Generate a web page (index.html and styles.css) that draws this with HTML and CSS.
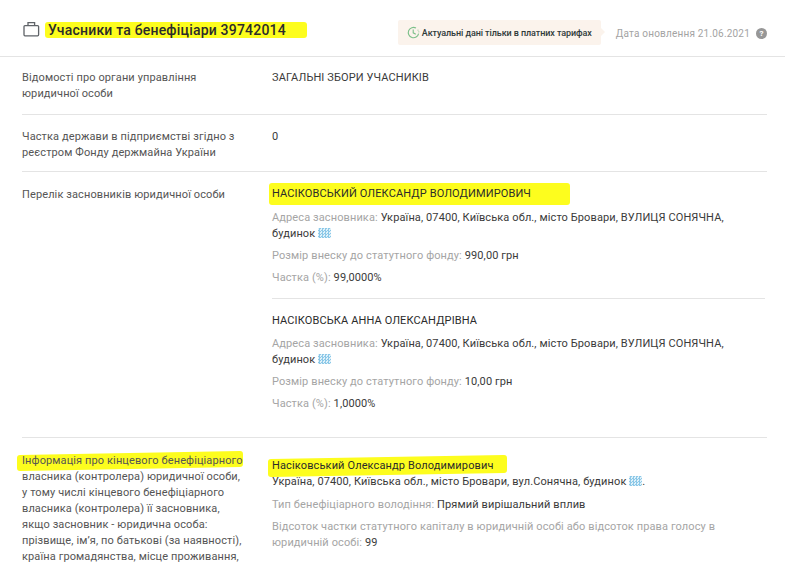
FILE: index.html
```html
<!DOCTYPE html>
<html lang="uk">
<head>
    <meta charset="UTF-8">
    <meta name="viewport" content="width=device-width, initial-scale=1.0">
    <title>Учасники та бенефіціари</title>
    <link rel="stylesheet" href="styles.css">
</head>
<body>
    <div class="header">
        <svg class="case-icon" width="17" height="16" viewBox="0 0 17 16" fill="none" stroke="#5f6368" stroke-width="1.3">
            <rect x="1" y="4.6" width="14.6" height="10.2" rx="1"/>
            <path d="M5 4.6V1.6h6.6v3"/>
        </svg>
        <h1 class="title"><span class="mark">Учасники та бенефіціари 39742014</span></h1>
        <div class="chip">
            <svg width="13" height="13" viewBox="0 0 13 13" fill="none" stroke="#7cc08a" stroke-width="1.1">
                <path d="M11.6 7.6A5.2 5.2 0 1 1 9 2"/>
                <path d="M6.2 3.4v3.4l2.6 1.4"/>
                <path d="M11 3.8v.8M11.8 5.6v.6"/>
            </svg>
            <span>Актуальні дані тільки в платних тарифах</span>
        </div>
        <div class="updated">Дата оновлення 21.06.2021</div>
        <div class="help">?</div>
    </div>

    <div class="rows">
        <div class="row">
            <div class="label">Відомості про органи управління юридичної особи</div>
            <div class="value">ЗАГАЛЬНІ ЗБОРИ УЧАСНИКІВ</div>
        </div>
        <div class="row row-share">
            <div class="label">Частка держави в підприємстві згідно з реєстром Фонду держмайна України</div>
            <div class="value">0</div>
        </div>
        <div class="row row-founders">
            <div class="label">Перелік засновників юридичної особи</div>
            <div class="value">
                <div class="person">
                    <div class="name"><span class="mark mark-name">НАСІКОВСЬКИЙ ОЛЕКСАНДР ВОЛОДИМИРОВИЧ</span></div>
                    <p class="info"><span class="muted">Адреса засновника:</span> Україна, 07400, Київська обл., місто Бровари, ВУЛИЦЯ СОНЯЧНА, будинок <span class="hidden-num"></span></p>
                    <p class="info"><span class="muted">Розмір внеску до статутного фонду:</span> 990,00 грн</p>
                    <p class="info"><span class="muted">Частка (%):</span> 99,0000%</p>
                </div>
                <div class="person">
                    <div class="name">НАСІКОВСЬКА АННА ОЛЕКСАНДРІВНА</div>
                    <p class="info"><span class="muted">Адреса засновника:</span> Україна, 07400, Київська обл., місто Бровари, ВУЛИЦЯ СОНЯЧНА, будинок <span class="hidden-num"></span></p>
                    <p class="info"><span class="muted">Розмір внеску до статутного фонду:</span> 10,00 грн</p>
                    <p class="info"><span class="muted">Частка (%):</span> 1,0000%</p>
                </div>
            </div>
        </div>
        <div class="row row-owner">
            <div class="label"><span class="slant slant-label">Інформація про кінцевого бенефіціарного</span> власника (контролера) юридичної особи, у тому числі кінцевого бенефіціарного власника (контролера) її засновника, якщо засновник - юридична особа: прізвище, ім’я, по батькові (за наявності), країна громадянства, місце проживання,</div>
            <div class="value owner">
                <div class="name"><span class="slant slant-owner">Насіковський Олександр Володимирович</span></div>
                <div class="address">Україна, 07400, Київська обл., місто Бровари, вул.Сонячна, будинок <span class="hidden-num"></span>.</div>
                <p class="info info-type"><span class="muted">Тип бенефіціарного володіння:</span> Прямий вирішальний вплив</p>
                <p class="info"><span class="muted">Відсоток частки статутного капіталу в юридичній особі або відсоток права голосу в юридичній особі:</span> 99</p>
            </div>
        </div>
    </div>
</body>
</html>
```

FILE: styles.css
```css
html, body {
    height: 100%;
    overflow: hidden;
}
body {
    margin: 0;
    background: #fff;
    color: #3a3a3a;
    font-family: Roboto, "Liberation Sans", sans-serif;
    font-size: 11px;
    line-height: 16px;
    letter-spacing: .11px;
}
p {
    margin: 0;
}
.mark {
    background: #fdfd1e;
    border-radius: 3px;
}
/* marker strokes that run slightly uphill */
.slant {
    position: relative;
    z-index: 0;
    display: inline-block;
    white-space: nowrap;
}
.slant::before {
    content: "";
    position: absolute;
    z-index: -1;
    top: -1px;
    bottom: -1px;
    background: #fdfd1e;
    border-radius: 3px;
    transform: skewY(-1deg);
}

.header {
    display: flex;
    align-items: center;
    height: 56px;
    padding: 0 18px 0 23px;
    border-bottom: 1px solid #e4e4e4;
}
.case-icon {
    flex: none;
    margin-top: 2px;
}
.title {
    flex: 1;
    margin: 4px 0 0 5px;
    font-size: 14px;
    font-weight: 500;
    line-height: 20px;
    letter-spacing: .2px;
    color: #2b2b2b;
}
.title .mark {
    padding: 0 21px 0 3px;
}
.chip {
    position: relative;
    display: flex;
    align-items: center;
    gap: 2px;
    height: 25px;
    margin-top: 9px;
    padding: 0 9px 0 9px;
    background: #fbf3ec;
    border-radius: 2px;
    font-size: 9px;
    font-weight: 500;
    letter-spacing: -.08px;
    color: #2f3a3a;
}
.chip::after {
    content: "";
    position: absolute;
    right: -4px;
    top: 8px;
    border-left: 4px solid #fbf3ec;
    border-top: 4px solid transparent;
    border-bottom: 4px solid transparent;
}
.updated {
    margin: 12px 0 0 15px;
    font-size: 10px;
    letter-spacing: .2px;
    color: #a3a3a3;
}
.help {
    width: 11px;
    height: 11px;
    margin: 11px 0 0 6px;
    border-radius: 50%;
    background: #979797;
    color: #fff;
    font-size: 8px;
    font-weight: 700;
    line-height: 11px;
    letter-spacing: 0;
    text-align: center;
}

.rows {
    padding: 0 18px 0 22px;
}
.row {
    display: flex;
    padding: 13px 0 12px;
    border-bottom: 1px solid #e4e4e4;
}
.row-share {
    padding: 14px 0 10px;
}
.label {
    flex: none;
    width: 222px;
    margin-right: 28px;
    color: #555;
}
.value {
    flex: 1;
    min-width: 0;
}
.muted {
    color: #a5a5a5;
}
.info {
    margin-top: 6px;
}
.name {
    color: #2b2b2b;
    letter-spacing: .13px;
}
.hidden-num {
    display: inline-block;
    width: 13px;
    height: 10px;
    vertical-align: -1px;
    background-color: #dff1f9;
    background-image: repeating-conic-gradient(#8cc8e8 0 25%, transparent 0 50%);
    background-size: 3px 3px;
}

.row-founders {
    padding-top: 14px;
    padding-bottom: 25px;
}
.row-founders .label {
    padding-top: 1px;
}
.mark-name {
    display: inline-block;
    padding: 3px 39px 3px 3px;
    margin: -3px 0 -3px -3px;
}
.person {
    width: 493px;
}
.person .name {
    margin-bottom: 8px;
}
.person + .person .name {
    margin-bottom: 7px;
}
.person + .person {
    margin-top: 12px;
    padding-top: 14px;
    border-top: 1px solid #e4e4e4;
}
.row-owner {
    padding-top: 15px;
    border-bottom: 0;
}
.slant-label::before {
    top: 0;
    bottom: 0;
    left: -5px;
    right: 0;
}
.owner {
    padding-top: 5px;
}
.slant-owner::before {
    left: -4px;
    right: -13px;
}
.info-type {
    margin-top: 7px;
}
```
